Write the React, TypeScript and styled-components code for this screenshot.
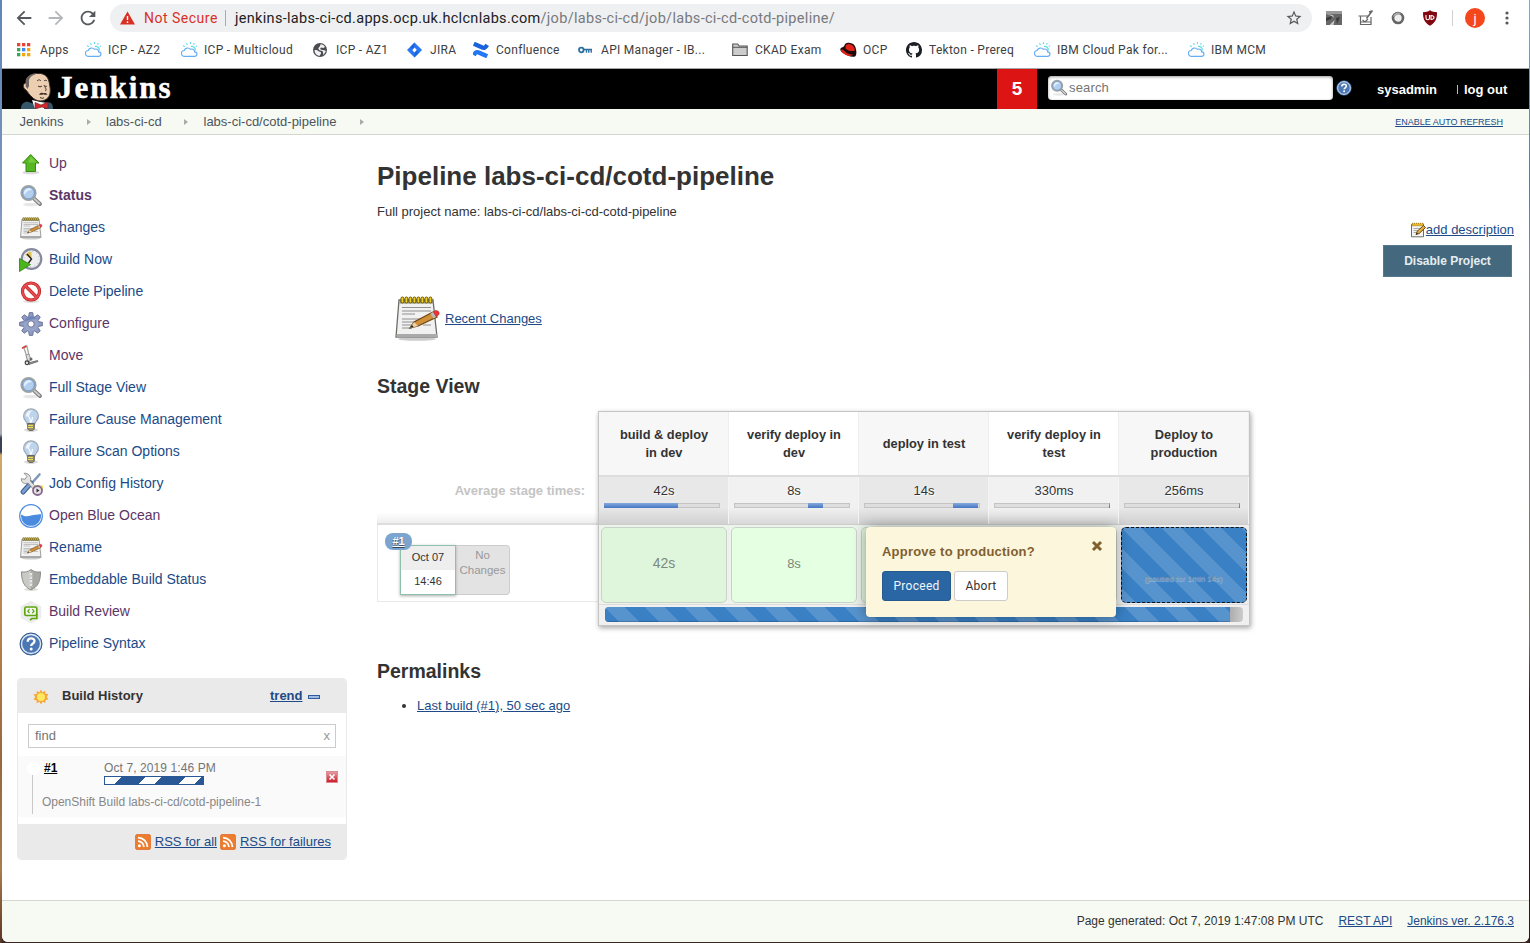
import React from "react";
import styled, { createGlobalStyle } from "styled-components";

const GlobalStyle = createGlobalStyle`
  * { box-sizing: border-box; }
  body { margin: 0; width: 1530px; height: 943px; overflow: hidden; color: #333; font: 13px/17px "Liberation Sans", Arial, sans-serif; }
  svg { display: block; flex: none; }
  h1, h2, ul { margin: 0; padding: 0; }
`;

const UI = `Roboto, "Liberation Sans", sans-serif`;

const Desktop = styled.div`
  width: 1530px; height: 943px; padding: 0 1px 1px 2px;
  background:
    linear-gradient(#8aa4bf 0, #5f7896 180px, #8a8a92 270px, #77706c 640px, #2b1a18 700px, #2b1a18 100%) right / 1px 100% no-repeat,
    linear-gradient(#5f86b8 0, #7b95c0 200px, #b0b2bd 330px, #a9abb5 434px, #3b3f55 438px, #3b3f55 452px, #d2a768 455px, #b5804c 640px, #98673f 760px, #a87d4c 870px, #5a3523 943px) left / 2px 100% no-repeat,
    #3a2724;
`;
const Window = styled.div`
  height: 942px; display: flex; flex-direction: column; background: #fff;
  border-radius: 0 0 6px 6px; overflow: hidden;
`;

/* ---------- browser chrome ---------- */
const Toolbar = styled.div`
  height: 36px; display: flex; align-items: center; padding-left: 11px; flex: none; font-family: ${UI};
`;
const ToolButton = styled.div<{ $w?: number }>`
  width: ${(p) => p.$w ?? 32}px; display: flex; justify-content: center; flex: none;
`;
const Omnibox = styled.div`
  width: 1202px; height: 28px; margin-left: 6px; border-radius: 14px; background: #eff0f2;
  display: flex; align-items: center; padding: 0 9px 0 10px; flex: none; font-size: 14px; color: #202124;
`;
const NotSecure = styled.span`
  width: 81px; margin-left: 9px; color: #d93025; letter-spacing: .5px; white-space: nowrap;
`;
const OmniRule = styled.span`width: 1px; height: 16px; background: #a9abae; margin-right: 9px;`;
const Url = styled.span`
  flex: 1; letter-spacing: .31px; white-space: nowrap; font-size: 14.5px;
  span { color: #77797d; }
`;
const Avatar = styled.div`
  width: 20px; height: 20px; border-radius: 50%; background: #f4471c; color: #fff;
  display: flex; align-items: center; justify-content: center; font-size: 13px;
`;
const ToolRule = styled.span`width: 1px; height: 16px; background: #d0d0d2; margin: 0 3px 0 12px;`;

const Bookmarks = styled.div`
  height: 33px; display: flex; padding: 0 0 5px 15px; align-items: center; flex: none;
  border-bottom: 1px solid #a6a6a6; font: 12px/16px ${UI}; color: #3c4043;
`;
const Bookmark = styled.div<{ $w: number }>`
  width: ${(p) => p.$w}px; display: flex; align-items: center; white-space: nowrap; flex: none;
  letter-spacing: .3px;
`;
const BookmarkIcon = styled.span`width: 23px; flex: none;`;

/* ---------- page header ---------- */
const Header = styled.header`
  height: 40px; background: #000; display: flex; flex: none; align-items: center; color: #fff;
`;
const Brand = styled.div`
  width: 995px; height: 40px; display: flex; align-items: flex-end; padding-left: 18px; gap: 3px;
  font: bold 31px/42px "Liberation Serif", serif; letter-spacing: 2px; -webkit-text-stroke: .5px #fff;
`;
const Alert = styled.div`
  width: 40px; height: 40px; background: #dc1414; text-align: center; font: bold 19px/40px "Liberation Sans", sans-serif;
`;
const SearchBox = styled.div`
  width: 285px; height: 24px; margin: -3px 3px 0 11px; padding-left: 2px; border-radius: 4px; background: #fff;
  box-shadow: inset 0 1px 3px #999; display: flex; align-items: center; gap: 1px; color: #757575;
  font-size: 13px; letter-spacing: .15px;
`;
const SearchHelp = styled.div`margin-top: -2px;`;
const HeaderLinks = styled.div`
  display: flex; margin-left: 25px; font-weight: bold; letter-spacing: 0; padding-top: 1px; align-items: center;
  span { width: 80px; }
`;
const Tick = styled.i`width: 1px; height: 9px; background: #bbb; margin: -1px 6px 0 0;`;

const Crumbs = styled.nav`
  height: 26px; background: #f6faf2; border-bottom: 1px solid #d3d7cf; display: flex; align-items: center; flex: none;
  padding: 0 26px 0 17.5px; color: #4d545d;
`;
const Crumb = styled.span<{ $w: number }>`
  width: ${(p) => p.$w}px; display: flex; justify-content: space-between; align-items: center; margin-right: 15.500px; letter-spacing: 0;
  &::after { content: ""; border-left: 4px solid #aaa; border-top: 3px solid transparent; border-bottom: 3px solid transparent; margin-top: 1px; }
`;
const AutoRefresh = styled.a`
  margin: 2px 0 0 auto; color: #204a87; text-decoration: underline; font-size: 9px;
`;

/* ---------- side panel ---------- */
const Page = styled.div`flex: 1; display: flex; min-height: 0;`;
const Side = styled.aside`width: 345px; padding: 12px 0 0 15px; flex: none;`;
const Task = styled.div<{ $visited?: boolean; $bold?: boolean }>`
  height: 32px; display: flex; align-items: center; gap: 6px; padding-left: 2px; font-size: 14px;
  color: ${(p) => (p.$visited ? "#5c3566" : "#204a87")}; font-weight: ${(p) => (p.$bold ? "bold" : "normal")};
  svg { margin-top: 1px; }
`;
const History = styled.section`
  width: 330px; height: 182px; margin-top: 19px; border: 1px solid #eaeaea; border-radius: 4px; overflow: hidden;
  display: flex; flex-direction: column;
`;
const HistoryHead = styled.div`
  height: 34px; background: #eaeaea; display: flex; align-items: center; padding: 0 0 1px 15px; font-weight: bold; flex: none; font-size: 13px;
  svg { margin-top: 2px; }
`;
const HistoryTitle = styled.span`width: 208px; margin-left: 13px;`;
const Link = styled.a`color: #204a87; text-decoration: underline; white-space: nowrap;`;
const Minus = styled.i`width: 12px; height: 4px; margin: 3px 0 0 5px; border: 1px solid #2f5b9d; background: #9dbce4;`;
const Find = styled.div`
  margin: 11px 10px 8px; height: 24px; border: 1px solid #ccc; display: flex; justify-content: space-between; align-items: center;
  padding: 0 5px 1px 6px; color: #757575; flex: none; font-size: 13px;
  span + span { color: #999; font-size: 13px; }
`;
const BuildRow = styled.div`
  height: 61px; background: #fafafa; display: grid; grid-template-columns: 24px 60px 221px auto; grid-template-rows: 34px 27px; flex: none;
`;
const Node = styled.div`
  grid-column: 1; grid-row: 1 / 3; margin-left: 7px; width: 16px; display: flex; flex-direction: column; align-items: center; padding-top: 6px;
  &::before { content: ""; width: 13px; height: 13px; border-radius: 50%; background: #fff; }
  &::after { content: ""; width: 1px; height: 39px; background: #c8c8c8; margin-right: 1px; }
`;
const BuildNo = styled.a`
  grid-column: 2; grid-row: 1; color: #000; font-weight: bold; text-decoration: underline; padding: 4px 0 0 2px; font-size: 12px;
`;
const BuildTime = styled.div`
  grid-column: 3; grid-row: 1; color: #757575; font-size: 12px; padding: 4px 0 0 2px; line-height: 16px; letter-spacing: .1px;
`;
const BuildBar = styled.div`
  width: 100px; height: 9px; border: 1px solid #2a5795;
  background: repeating-linear-gradient(135deg, #fff 0 11.500px, #2a5795 11.500px 28.300px);
`;
const Stop = styled.div`
  grid-column: 4; grid-row: 1;
  width: 12px; height: 12px; margin: 15px 0 0 3px; border: 1px solid #d98a92; background: linear-gradient(#e59aa0, #cf1c28);
  display: flex; align-items: center; justify-content: center;
`;
const BuildDesc = styled.div`grid-column: 2 / 5; grid-row: 2; padding: 4px 0 0; color: #888; font-size: 12px; letter-spacing: -.02px;`;
const Feeds = styled.div`
  margin-top: auto; height: 35px; background: #eaeaea; display: flex; align-items: center; justify-content: flex-end; gap: 3.500px; padding-right: 15px; font-size: 13px;
`;

/* ---------- main panel ---------- */
const Main = styled.main`flex: 1; padding: 26px 15px 0 30px; display: flex; flex-direction: column; align-items: flex-start;`;
const Title = styled.h1`font-size: 26px; line-height: 30px; white-space: nowrap;`;
const FullName = styled.div`margin-top: 12px; font-size: 13px;`;
const Actions = styled.div`
  align-self: flex-end; display: flex; flex-direction: column; align-items: flex-end; margin-top: 1px;
`;
const AddDesc = styled.div`display: flex; align-items: center; height: 17px; font-size: 13px;`;
const Disable = styled.button`
  width: 129px; height: 32px; margin: 7px 2px 0 0; border: 1px solid #56798e; background: #44697f; color: #e6edf1; padding: 0;
  font: bold 12px/30px "Liberation Sans", sans-serif; letter-spacing: 0;
`;
const Recent = styled.div`display: flex; align-items: center; gap: 4px; margin: 17px 0 0 16px; height: 48px; font-size: 13px;`;
const SubTitle = styled.h2<{ $mt: number }>`font-size: 19.500px; line-height: 24px; margin-top: ${(p) => p.$mt}px;`;

const StageView = styled.div`margin-top: 13px; height: 215px; display: flex;`;
const Runs = styled.div`width: 221px; display: flex; flex-direction: column; padding-top: 65px;`;
const AvgLabel = styled.div`
  height: 49px; padding: 6px 13px 0 0; text-align: right; font-weight: bold; color: #c4c4c4; line-height: 18px;
  border-bottom: 2px solid #ddd; background: linear-gradient(#fff 78%, #eee);
`;
const Run = styled.div`
  position: relative; height: 77px; border: solid #e9e9e9; border-width: 0 0 1px 1px; display: flex; padding: 20px 0 0 22px;
`;
const Badge = styled.a`
  position: absolute; left: 7px; top: 8px; width: 27px; height: 17px; border-radius: 8px; background: #7ba4cf; color: #fff; z-index: 1;
  font: bold 11px/17px "Liberation Sans", sans-serif; text-align: center; text-decoration: underline; text-shadow: 0 1px 1px #345;
`;
const When = styled.div`
  width: 56px; height: 50px; border: 1px solid #8fc0ab; box-shadow: 0 1px 3px #aaa; text-align: center; font-size: 11px; line-height: 23px; z-index: 0;
  div:first-child { background: #eee; height: 24px; }
`;
const NoChanges = styled.div`
  width: 54px; height: 50px; border: 1px solid #ccc; border-left: 0; border-radius: 0 4px 4px 0; background: #e3e3e3; color: #999;
  font-size: 11.500px; line-height: 15px; text-align: center; padding-top: 2px;
`;
const Matrix = styled.div`
  width: 652px; height: 215px; border: 1px solid #c4c4c4; box-shadow: 1px 2px 5px rgba(0,0,0,.35); background: #f0f0f0; display: flex; flex-direction: column;
`;
const Columns = styled.div`display: grid; grid-template-columns: repeat(5, 130px); flex: none;`;
const Column = styled.div<{ $state: string }>`
  display: flex; flex-direction: column; background: ${(p) => (p.$state === "paused" ? "#eee" : "#edf5eb")};
  box-shadow: inset -1px 0 #eee;
`;
const StageName = styled.div<{ $odd: boolean }>`
  height: 63px; display: flex; align-items: center; justify-content: center; text-align: center; line-height: 18px; font-weight: bold;
  background: ${(p) => (p.$odd ? "#f7f7f7" : "#fff")}; padding: 0 12px; letter-spacing: 0; font-size: 12.800px;
  box-shadow: inset -1px 0 #eee;
`;
const StageAvg = styled.div<{ $odd: boolean }>`
  height: 50px; border-top: 2px solid #ddd; border-bottom: 1px solid #ccc; text-align: center; line-height: 18px; padding: 5px 9px 0 5px; text-shadow: 1px 1px 1px #fff;
  background: linear-gradient(transparent 65%, rgba(0,0,0,.1)), ${(p) => (p.$odd ? "#e8e8e8" : "#f1f1f1")};
  box-shadow: inset -1px 0 #f4f4f4;
  span { margin-left: 4px; }
`;
const Track = styled.div`
  width: 116px; height: 5px; margin-top: 3px; background: #dedede; display: flex; border: 1px solid #c4c4c4; border-width: 1px 1px 1px;
`;
const Fill = styled.i`height: 5px; margin-top: -1px; background: linear-gradient(#86a9dc, #4477c4); flex: none;`;
const Cell = styled.div<{ $odd: boolean; $state: string }>`
  margin: 2px 2px 1px; height: 76px; border-radius: 5px; display: flex; align-items: center; justify-content: center; color: #7c8a7c; font-size: ${(p) => (p.$odd ? 14 : 13)}px;
  padding-bottom: 4px; border: 1px solid #c8d2c8; background: ${(p) => (p.$odd ? "#dff6dd" : "#e5ffe3")};
  ${(p) => p.$state === "paused" && `
    border: 1px dashed #111; color: #7d93a8; font-size: 8px; padding: 26px 0 0;
    text-shadow: 0 1px 1px #fff8;
    background: linear-gradient(45deg, rgba(255,255,255,.15) 25%, transparent 25%, transparent 50%, rgba(255,255,255,.15) 50%, rgba(255,255,255,.15) 75%, transparent 75%) 0 0 / 40px 40px, #3a80c4;
  `}
`;
const RunProgress = styled.div`
  flex: 1; border-top: 1px solid #ddd; padding: 2px 5px 0 6px;
`;
const ProgressTrack = styled.div`
  height: 15px; width: 638px; border-radius: 4px; overflow: hidden; background: linear-gradient(90deg, #aaa 624px, #ccc);
`;
const ProgressFill = styled.div`
  width: 625px; height: 15px; box-shadow: inset 0 -1px 1px #0003;
  background: linear-gradient(45deg, rgba(255,255,255,.15) 25%, transparent 25%, transparent 50%, rgba(255,255,255,.15) 50%, rgba(255,255,255,.15) 75%, transparent 75%) 0 0 / 40px 40px, #3a80c4;
`;
const StageHolder = styled.div`position: relative;`;
const Popover = styled.div`
  position: absolute; left: 268px; top: 116px; width: 250px; height: 90px; padding: 15px 16px; border-radius: 4px; background: #fcf6dd;
  box-shadow: 0 0 14px rgba(0,0,0,.38); z-index: 2;
`;
const Ask = styled.div`
  display: flex; justify-content: space-between; font-weight: bold; color: #815f2f; font-size: 13px; line-height: 19px; letter-spacing: .22px;
  svg { margin: -2px -3px 0 0; }
`;
const Buttons = styled.div`display: flex; gap: 3px; margin-top: 10px;`;
const Choice = styled.button<{ $primary?: boolean; $w: number }>`
  width: ${(p) => p.$w}px; height: 30px; border-radius: 3px; padding: 0; font: 12px/26px ${UI}; letter-spacing: .3px;
  border: 1px solid ${(p) => (p.$primary ? "#265a8e" : "#ccc")}; background: ${(p) => (p.$primary ? "#2966a3" : "#fff")}; color: ${(p) => (p.$primary ? "#f0f5fa" : "#333")};
`;
const Permalinks = styled.ul`margin: 14px 0 0 40px; font-size: 13px;`;

const Footer = styled.footer`
  height: 42px; border-top: 1px solid #d3d7cf; background: #f6faf2; display: flex; justify-content: flex-end; align-items: center; gap: 15px; padding: 0 15px 1px 0; font-size: 12px; flex: none;
`;

/* ---------- icons ---------- */
const Notepad = ({ size = 24 }: { size?: number }) => (
  <svg width={size} height={size} viewBox="0 0 48 48">
    <ellipse cx="24" cy="45" rx="19" ry="1.800" fill="#ccc" />
    <path d="M6 6h34l4 37H3z" fill="#f1f1f1" stroke="#6e6e68" strokeWidth="1.300" />
    <path d="M4 40h40l.4 3.500H3.400z" fill="#aaa" />
    <path d="M7 5h33l.6 4.500H6.500z" fill="#8f8f80" />
    {[8, 12, 16, 20, 24, 28, 32, 36].map((x) => <rect key={x} x={x} y="3" width="2.800" height="6" rx="1.300" fill="#f0d020" stroke="#6a5600" strokeWidth="1" />)}
    <path d="M9 13.500h29M9 17h29M9 20h13M9 25h18M9 28h16M9 31h12M9 34h10M30 31h8" stroke="#8f8f8f" strokeWidth="1" />
    <path d="M17 34l4-6 19-10 4 5-19 9z" fill="#cf9038" stroke="#6d4413" strokeWidth="1.200" />
    <path d="M17 34l4-6 4 4z" fill="#ecd6a8" />
    <path d="M17 34l2-3 1.500 1.800z" fill="#222" />
    <path d="M40 18l2.500-1.500c3-.5 5 3 2.500 5L43 23z" fill="#e33" stroke="#a33" strokeWidth=".6" />
    <path d="M37.500 19.500l2.500-1.500 3 5-2.500 1.500z" fill="#bbb" />
  </svg>
);
const Memo = () => (
  <svg width="16" height="16" viewBox="0 0 16 16">
    <path d="M1.500 2.500h12v12.300h-12z" fill="#f3f3f3" stroke="#6e6e68" strokeWidth="1" />
    <path d="M2 1.300h11.500v2.500H2z" fill="#e8b52a" stroke="#8a6500" strokeWidth=".8" strokeDasharray="1 1" />
    <path d="M3.500 6.500h7M3.500 8.500h5M3.500 10.500h3" stroke="#aaa" />
    <path d="M6 12.500l1.200-3.200L13.500 3.500l2 2-6.300 6z" fill="#e3ae3d" stroke="#5d3c0c" strokeWidth=".9" />
    <path d="M6 12.500l.8-2 1.200 1.200z" fill="#222" />
  </svg>
);
const Lens = ({ size = 24 }: { size?: number }) => (
  <svg width={size} height={size} viewBox="0 0 24 24">
    <ellipse cx="12" cy="20.500" rx="8" ry="1.700" fill="#e8e8e8" />
    <path d="M15 14.500l6 5.500" stroke="#777" strokeWidth="3.800" strokeLinecap="round" />
    <path d="M15.500 15l5 4.500" stroke="#ccc" strokeWidth="2" strokeLinecap="round" />
    <circle cx="9.500" cy="9" r="7.200" fill="#b3cff0" stroke="#a2a39f" strokeWidth="1.800" />
    <circle cx="9.500" cy="9" r="5.900" fill="none" stroke="#5d86bd" strokeWidth=".8" />
    <path d="M5 9a4.800 4.800 0 018-3.500C9 6 7 8 5.500 11z" fill="#e6f0fc" />
  </svg>
);
const Bulb = () => (
  <svg width="24" height="24" viewBox="0 0 24 24">
    <ellipse cx="12" cy="22" rx="7" ry="1.700" fill="#ddd" />
    <path d="M12 .8a7.400 7.400 0 00-7.400 7.400c0 4 3.600 5 4 8.800h6.800c.4-3.800 4-4.800 4-8.800A7.400 7.400 0 0012 .8z" fill="#bdd4ee" stroke="#a3a9b3" strokeWidth="1.200" />
    <path d="M7 8c0-4 3-5.500 6-5.500-2 2-3 4-3 7z" fill="#eef5fd" />
    <path d="M10.500 9l1 5h1l1-5" fill="none" stroke="#fff" strokeWidth="1.200" />
    <path d="M8.700 15.500h6.600v5.500l-1.500 1.600h-3.600L8.700 21z" fill="#96906a" stroke="#55534a" strokeWidth=".8" />
    <path d="M9 17.500h5M9 19.500h5" stroke="#e6e05a" strokeWidth="1" />
  </svg>
);
const Up = () => (
  <svg width="24" height="24" viewBox="0 0 24 24">
    <ellipse cx="12" cy="20.500" rx="8.500" ry="1.700" fill="#d8d8d8" />
    <path d="M11.700 2.500l8.300 8.500h-3.500v8.500h-9.500V11H3.500z" fill="#58b624" stroke="#358a0c" strokeWidth="1" />
    <path d="M12 4.500l5.500 6H9z" fill="#85d44c" opacity=".7" />
  </svg>
);
const BuildNow = () => (
  <svg width="24" height="24" viewBox="0 0 24 24">
    <circle cx="12.500" cy="11" r="9.800" fill="#eeeef0" stroke="#85889e" strokeWidth="2.200" />
    <circle cx="12.500" cy="11" r="7.500" fill="none" stroke="#bbb" strokeWidth="1" strokeDasharray="1 3" />
    <path d="M12.500 11V3.500A8 8 0 006.500 7z" fill="#dfc45c" />
    <path d="M8 6l4.500 5-3 4" fill="none" stroke="#222" strokeWidth="1.400" />
    <path d="M.5 10.500l11 6-11 7z" fill="#4db51c" stroke="#2e7e08" strokeWidth=".8" />
  </svg>
);
const Delete = () => (
  <svg width="24" height="24" viewBox="0 0 24 24">
    <ellipse cx="12" cy="21.500" rx="8" ry="1.500" fill="#ddd" />
    <circle cx="12" cy="11.500" r="8.500" fill="#fff" stroke="#b8171b" strokeWidth="3.200" />
    <path d="M6.500 6l11 11" stroke="#c41a1e" strokeWidth="3.200" />
    <circle cx="12" cy="11.500" r="8.500" fill="none" stroke="#e54c4f" strokeWidth="2" />
    <path d="M6.500 6l11 11" stroke="#e54c4f" strokeWidth="2" />
  </svg>
);
const Gear = () => (
  <svg width="24" height="24" viewBox="0 0 24 24">
    <g fill="#8f9bc4" stroke="#5d6689" strokeWidth=".8">
      {[0, 45, 90, 135, 180, 225, 270, 315].map((a) => <path key={a} d="M9.300 6L10.300.6h3.400L14.700 6z" transform={`rotate(${a} 12 12)`} />)}
    </g>
    <circle cx="12" cy="12" r="7.600" fill="#98a3c9" />
    <path d="M5 10a7.500 7.500 0 0113-3c-5 0-9 1-13 3z" fill="#6d85b8" />
    <circle cx="12" cy="12" r="3.200" fill="#fff" stroke="#6d7699" strokeWidth="1" />
  </svg>
);
const Trolley = () => (
  <svg width="24" height="24" viewBox="0 0 24 24">
    <path d="M4.500 4L8 2.500 9.500 9l1 9M5 4l2 6 2 8" fill="none" stroke="#a5a59d" strokeWidth="1.300" />
    <path d="M3.500 4L7 2" stroke="#d33d3d" strokeWidth="1.600" strokeLinecap="round" />
    <path d="M7 11l3-1 2 6-3 2z" fill="#ddd" stroke="#888" strokeWidth=".8" />
    <path d="M9 19l9.500-2.500.5 1-9 3z" fill="#999" stroke="#555" strokeWidth=".7" />
    <circle cx="8" cy="18.800" r="1.900" fill="#ddd" stroke="#333" strokeWidth="1.100" />
    <circle cx="12" cy="15" r="1.500" fill="#666" />
  </svg>
);
const Tools = () => (
  <svg width="24" height="24" viewBox="0 0 24 24">
    <path d="M20.500 2.500l-8 9" stroke="#8298b8" strokeWidth="2.600" strokeLinecap="round" />
    <path d="M12 11L4 20" stroke="#3b5f95" strokeWidth="5" strokeLinecap="round" />
    <path d="M12 11L4 20" stroke="#7d9fcf" strokeWidth="2.800" strokeLinecap="round" />
    <path d="M5 1.300l3 3-2 3-3.700-.6C2 11 6 12.500 9 11l9 10.500 3-2L11.500 9C12.500 4 9 .8 5 1.300z" fill="#e2e2e0" stroke="#888" strokeWidth=".9" />
    <rect x="14" y="13.500" width="10" height="5" fill="#eedb64" />
    <circle cx="18.500" cy="18.500" r="4.500" fill="#e7dfe9" stroke="#846a8c" strokeWidth="1.800" />
    <path d="M17.500 16.500l3 2-3 2z" fill="#333" />
  </svg>
);
const Ocean = () => (
  <svg width="24" height="24" viewBox="0 0 24 24">
    <circle cx="12" cy="12" r="11.300" fill="#fff" stroke="#4a8bdf" strokeWidth="1.300" />
    <path d="M2.200 10.500c4 2.500 6.500 2 9.800 1 3.500-1 6-.5 9.800-1.500A9.800 9.800 0 0112 21.800 9.800 9.800 0 012.200 10.500z" fill="#4a8bdf" />
  </svg>
);
const Shield = () => (
  <svg width="24" height="24" viewBox="0 0 24 24">
    <ellipse cx="12" cy="21.500" rx="7" ry="1.500" fill="#ddd" />
    <path d="M12 1.500c-3 2.500-6.500 3-9.500 2.300C2.500 13 5 19 12 21.800z" fill="#c9c9c5" />
    <path d="M12 1.500c3 2.500 6.500 3 9.500 2.300C21.500 13 19 19 12 21.800z" fill="#a7a8a4" />
    <path d="M12 1.500c3 2.500 6.500 3 9.500 2.300C21.500 13 19 19 12 21.800 5 19 2.500 13 2.500 3.800 5.500 4.500 9 4 12 1.500z" fill="none" stroke="#8d8e8a" />
    <path d="M12 4v15" stroke="#e8e8e8" strokeWidth="2.500" />
    <path d="M12 4v15" stroke="#777" strokeDasharray="1 2.500" />
  </svg>
);
const Review = () => (
  <svg width="24" height="24" viewBox="0 0 24 24">
    <path d="M12 .8l10.300 5.600v11.500L12 23.600 1.700 17.900V6.400z" fill="#ececec" />
    <rect x="5.800" y="7" width="12" height="8.500" rx="1.500" fill="#f4f4f4" stroke="#5ea60d" strokeWidth="1.700" />
    <path d="M10.500 9.200L8.800 11.200l1.700 2M13.300 9.200l1.700 2-1.700 2" fill="none" stroke="#5ea60d" strokeWidth="1.200" />
    <path d="M17.800 14v4.500H13l-2 1.500" fill="none" stroke="#5ea60d" strokeWidth="1.700" />
  </svg>
);
const Help = ({ size = 24 }: { size?: number }) => (
  <svg width={size} height={size} viewBox="0 0 24 24">
    <circle cx="12" cy="12" r="11" fill="#4b77b4" stroke="#33598f" strokeWidth="1" />
    <circle cx="12" cy="12" r="9.500" fill="none" stroke="#e2eaf4" strokeWidth="1.400" />
    <path d="M8.700 9.700C8.700 5.500 15.500 5.500 15.500 9c0 2.700-3.300 2.600-3.300 5" fill="none" stroke="#fff" strokeWidth="2.300" />
    <circle cx="12.200" cy="17" r="1.500" fill="#fff" />
  </svg>
);
const Cloud = () => (
  <svg width="17" height="17" viewBox="0 0 17 17" fill="none">
    <path d="M3.500 15.300a2.900 2.900 0 01-.4-5.800C4 7 7.500 6 9.500 8.300c2-.9 4.300.5 4.200 2.500 3 .1 3 4.500 0 4.500z" stroke="#66aef5" strokeWidth="1.200" />
    <path d="M10 5.500c2.500-.5 4.500 1.300 4.300 4" stroke="#5fe0e0" strokeWidth="1.200" />
    <path d="M9.500 1v2M5.500 2l.9 1.900M2 4.500l1.700 1.200M13.300 2l-.8 1.800M16 4.800l-1.300.8" stroke="#6bdcea" strokeWidth="1.100" />
  </svg>
);
const Grid = () => (
  <svg width="15" height="15" viewBox="0 0 15 15">
    {["#ea4335", "#ea4335", "#ea4335", "#34a853", "#4285f4", "#f5a60a", "#34a853", "#f5a60a", "#f5a60a"].map((c, i) => (
      <rect key={i} x={(i % 3) * 5} y={Math.floor(i / 3) * 5 + 1} width="3.300" height="3.300" fill={c} />
    ))}
  </svg>
);
const Globe = () => (
  <svg width="16" height="16" viewBox="0 0 16 16">
    <circle cx="7" cy="8" r="7" fill="#4a4c50" />
    <path d="M1.500 8c1.500-.3 4 .3 4.500 1.500 1 .2 2.500.5 2 2L6.500 14C3.500 13.500 1.500 11.500 1.500 8zM7.500 2.200c1.500-.2 3.500.8 4.500 2.600L10.500 6 8 5.500 7 7l2 1 2.500.2L12.800 9c-.5 2-1.500 3-2.800 3.800.3-1.800.2-2.800-.5-3.500-1-.8-3.500-.8-4-2.300C5 5.500 7.500 4.500 7.500 2.200z" fill="#fff" opacity=".92" />
  </svg>
);
const Jira = () => (
  <svg width="16" height="16" viewBox="0 0 16 16">
    <path d="M7.500.4l7.600 7.600-7.600 7.600L-.1 8z" fill="#2878f5" />
    <path d="M7.500 5.600L9.900 8l-2.400 2.400L5.100 8z" fill="#fff" />
    <path d="M7.500.4v5.200L5.100 8 3.500 4.400zM7.500 15.600v-5.200L9.900 8l1.600 3.600z" fill="#0d50bd" opacity=".45" />
  </svg>
);
const Confluence = () => (
  <svg width="16" height="16" viewBox="0 0 16 16" fill="none" strokeWidth="4.400">
    <path d="M.8 13.200c2-3.300 3-3.700 6-2.300l7.400 3.300" stroke="#2277f3" />
    <path d="M14.200 2.800c-2 3.300-3 3.700-6 2.300L.8 1.800" stroke="#1a62dc" />
  </svg>
);
const Key = () => (
  <svg width="16" height="16" viewBox="0 0 16 16" fill="none" stroke="#2b6f9f">
    <circle cx="3.300" cy="8" r="2.300" strokeWidth="1.800" />
    <path d="M5.500 7.500H14M8.500 7.500v3.300M10.800 7.500v3.300M13.200 7.500v3.300" strokeWidth="1.400" />
  </svg>
);
const Folder = () => (
  <svg width="16" height="16" viewBox="0 0 16 16">
    <path d="M.7 2h5l1.500 2h8v9.500H.7z" fill="#ccc" stroke="#555" strokeWidth="1.100" />
    <path d="M.7 5.300h14.500" stroke="#555" />
  </svg>
);
const Hat = () => (
  <svg width="17" height="16" viewBox="0 0 17 16">
    <path d="M4.200 4C5 .8 7.500.3 10 1c4 .5 5.500 3 6 6.500.8 3 .3 6-1 7-4 1-8-1-10.500-3C1.500 10.500-.2 8.500.5 6.500 1.500 5 3.500 5.500 4.200 4z" fill="#1b0a09" />
    <path d="M5.500 4.500C6 2 8 1.500 10 2.200c3 .5 4.500 2.500 5 6C13 10 8 9 5.500 6.500z" fill="#e2231a" />
    <path d="M.8 7.800c1-.8 2.500 0 3.700 1.200 2 2.200 5.500 4 8.500 3.500-1 1.500-3.500 2-6.500.8C4 12.500 1 10 .8 7.800z" fill="#e2231a" />
  </svg>
);
const GitHub = () => (
  <svg width="16" height="16" viewBox="0 0 16 16">
    <path fillRule="evenodd" fill="#1b1f23" d="M8 0C3.580 0 0 3.580 0 8c0 3.540 2.290 6.530 5.470 7.590.4.070.55-.17.55-.38 0-.19-.01-.82-.01-1.490-2.010.37-2.530-.49-2.690-.94-.09-.23-.48-.94-.82-1.130-.28-.15-.68-.52-.01-.53.63-.01 1.080.58 1.230.82.72 1.210 1.870.87 2.330.66.070-.52.28-.87.51-1.070-1.780-.2-3.640-.89-3.640-3.950 0-.87.31-1.590.82-2.150-.08-.2-.36-1.020.08-2.120 0 0 .67-.21 2.200.82.64-.18 1.320-.27 2-.27s1.360.09 2 .27c1.530-1.040 2.200-.82 2.200-.82.44 1.100.16 1.920.08 2.120.51.56.82 1.270.82 2.150 0 3.070-1.870 3.750-3.650 3.950.29.25.54.73.54 1.480 0 1.070-.01 1.930-.01 2.200 0 .21.15.46.55.38A8.010 8.010 0 0016 8c0-4.420-3.580-8-8-8z" />
  </svg>
);
const Butler = () => (
  <svg width="34" height="38" viewBox="0 0 34 38">
    <path d="M1 38c0-4 1.500-6.500 6-7.500l6 2 9-2 8 1c2.500 1 3 3 3 6.500z" fill="#36566b" />
    <path d="M12 29l3 9h9l1-6z" fill="#fff" />
    <path d="M6 19C2 17 3 12 6 12 6 5 12 2 18 2.500c7-.5 11 4 11.500 11 1.500 6 1 12-3 14.500-5 3.500-11 2-14.500-2-2.500-2-3.500-4-6-7z" fill="#eccfb1" stroke="#3b2d27" strokeWidth="1" />
    <path d="M6 13C4 7 10 1.500 18 2.500c-6 1.500-8 3.500-9 6.500l0 6-1.500 3-2-3z" fill="#6d6461" />
    <path d="M17 10c2-2 3-1 4 0M24 10c1-1 2-1 3 0M18 15c1 1 3 1 4 0M25 15c1 1 2 0 2 0M24 14c2 4 3 5 1 6" fill="none" stroke="#3b2d27" strokeWidth="1" />
    <path d="M19 23.500c1.500-2.500 3.500-2 4.500-1.200 1.500-.8 3.500 0 4 1.200-2 .5-3 .3-4-.3-1.500.8-3 .8-4.500.3z" fill="#3b2d27" />
    <path d="M20 26.500c2 1 3 1 4 0" stroke="#3b2d27" fill="none" />
    <path d="M15 31.500l6 2.500 7-3v7l-6-2-7 2z" fill="#d22b2f" stroke="#6d1416" strokeWidth=".6" />
  </svg>
);
const Sun = () => (
  <svg width="16" height="16" viewBox="0 0 16 16">
    <path d="M8 .5l1.600 2.700 2.700-1.400.1 3 3 .2L13.800 8l1.700 2.500-3 .5-.2 3-2.700-1.200L8 15.500l-1.600-2.700-2.700 1.400-.1-3-3.100-.4L2.200 8 .5 5.300l3.200-.4.1-3 2.700 1.300z" fill="#f6a83e" />
    <circle cx="8" cy="8" r="4.500" fill="#ffe95e" stroke="#eda03a" strokeWidth=".8" />
  </svg>
);
const Rss = () => (
  <svg width="16" height="16" viewBox="0 0 16 16">
    <rect x=".3" y=".3" width="15.400" height="15.400" rx="2.500" fill="#ee7c2f" stroke="#d5601c" strokeWidth=".6" />
    <circle cx="4.400" cy="11.700" r="1.500" fill="#fff" />
    <path d="M3 7.200a6 6 0 015.900 5.900M3 3.700a9.500 9.500 0 019.400 9.400" fill="none" stroke="#fff" strokeWidth="1.800" />
  </svg>
);

const bookmarks = [
  { icon: <Grid />, label: "Apps", w: 68 },
  { icon: <Cloud />, label: "ICP - AZ2", w: 96 },
  { icon: <Cloud />, label: "ICP - Multicloud", w: 132 },
  { icon: <Globe />, label: "ICP - AZ1", w: 94 },
  { icon: <Jira />, label: "JIRA", w: 66 },
  { icon: <Confluence />, label: "Confluence", w: 105 },
  { icon: <Key />, label: "API Manager - IB...", w: 154 },
  { icon: <Folder />, label: "CKAD Exam", w: 108 },
  { icon: <Hat />, label: "OCP", w: 66 },
  { icon: <GitHub />, label: "Tekton - Prereq", w: 128 },
  { icon: <Cloud />, label: "IBM Cloud Pak for...", w: 154 },
  { icon: <Cloud />, label: "IBM MCM", w: 90 },
];

const tasks = [
  { icon: <Up />, label: "Up", visited: true },
  { icon: <Lens />, label: "Status", visited: true, bold: true },
  { icon: <Notepad />, label: "Changes" },
  { icon: <BuildNow />, label: "Build Now" },
  { icon: <Delete />, label: "Delete Pipeline" },
  { icon: <Gear />, label: "Configure", visited: true },
  { icon: <Trolley />, label: "Move", visited: true },
  { icon: <Lens />, label: "Full Stage View" },
  { icon: <Bulb />, label: "Failure Cause Management" },
  { icon: <Bulb />, label: "Failure Scan Options" },
  { icon: <Tools />, label: "Job Config History" },
  { icon: <Ocean />, label: "Open Blue Ocean", visited: true },
  { icon: <Notepad />, label: "Rename" },
  { icon: <Shield />, label: "Embeddable Build Status" },
  { icon: <Review />, label: "Build Review", visited: true },
  { icon: <Help />, label: "Pipeline Syntax" },
];

const stages = [
  { name: ["build & deploy", "in dev"], avg: "42s", cell: "42s", start: -1, len: 74, state: "ok" },
  { name: ["verify deploy in", "dev"], avg: "8s", cell: "8s", start: 73, len: 15, state: "ok" },
  { name: ["deploy in test"], avg: "14s", cell: "", start: 88, len: 25, state: "ok" },
  { name: ["verify deploy in", "test"], avg: "330ms", cell: "", start: 114, len: 1, state: "ok" },
  { name: ["Deploy to", "production"], avg: "256ms", cell: "(paused for 1min 14s)", start: 114, len: 1, state: "paused" },
];

export default function App() {
  return (
    <Desktop>
      <GlobalStyle />
      <Window>
        <Toolbar>
          <ToolButton $w={22}><svg width="22" height="22" viewBox="0 0 24 24" fill="#55585c"><path d="M20 11H7.830l5.590-5.590L12 4l-8 8 8 8 1.410-1.410L7.830 13H20z" /></svg></ToolButton>
          <ToolButton $w={42}><svg width="22" height="22" viewBox="0 0 24 24" fill="#b4b6b9"><path d="M4 11h12.170l-5.590-5.590L12 4l8 8-8 8-1.410-1.410L16.170 13H4z" /></svg></ToolButton>
          <ToolButton $w={22}><svg width="22" height="22" viewBox="0 0 24 24" fill="#55585c"><path d="M17.650 6.350A7.958 7.958 0 0012 4c-4.420 0-7.990 3.580-7.990 8s3.570 8 7.990 8c3.730 0 6.840-2.550 7.730-6h-2.080A5.990 5.990 0 0112 18c-3.310 0-6-2.690-6-6s2.690-6 6-6c1.660 0 3.140.69 4.220 1.780L13 11h7V4z" /></svg></ToolButton>
          <ToolButton $w={5} />
          <Omnibox>
            <svg width="15" height="14" viewBox="0 0 15 14"><path d="M7.500.5L15 13.500H0z" fill="#d93025" /><path d="M7.500 5v4M7.500 10.300v1.600" stroke="#fff" strokeWidth="1.400" /></svg>
            <NotSecure>Not Secure</NotSecure>
            <OmniRule />
            <Url>jenkins-labs-ci-cd.apps.ocp.uk.hclcnlabs.com<span>/job/labs-ci-cd/job/labs-ci-cd-cotd-pipeline/</span></Url>
            <svg width="18" height="18" viewBox="0 0 24 24" fill="#55585c"><path d="M22 9.240l-7.190-.62L12 2 9.190 8.630 2 9.240l5.460 4.730L5.820 21 12 17.270 18.180 21l-1.630-7.030zM12 15.400l-3.760 2.270 1-4.280-3.320-2.880 4.380-.38L12 6.100l1.710 4.040 4.380.38-3.320 2.880 1 4.280z" /></svg>
          </Omnibox>
          <ToolButton $w={44}>
            <svg width="17" height="16" viewBox="0 0 17 16"><path d="M0 1h16v3H0z" fill="#999" /><path d="M0 4h16v11H0z" fill="#666" /><path d="M0 8l6-2-1 3-5 2zM10 8l4-1-3 7z" fill="#3a3a3a" /><path d="M3.500 15l5-5-1 5zM0 4l7 1 1 3-2-2z" fill="#c9c9c9" /></svg>
          </ToolButton>
          <ToolButton $w={20}>
            <svg width="16" height="16" viewBox="0 0 16 16" fill="none" stroke="#666"><path d="M10 6H.5M2.500 6v8.500h10.500V7M4.500 10l2.500 2 3-3M2.500 12h10" strokeWidth="1.200" /><path d="M8.500 8.500L14.500.5M11 2l3-1" strokeWidth="1.500" /></svg>
          </ToolButton>
          <ToolButton $w={44}>
            <svg width="14" height="14" viewBox="0 0 14 14"><circle cx="7" cy="7" r="5" fill="#eee" stroke="#666" strokeWidth="2.600" /><path d="M2 6a5 5 0 018-3.500L6 4z" fill="#aaa" /></svg>
          </ToolButton>
          <ToolButton $w={20}>
            <svg width="16" height="16" viewBox="0 0 16 16"><path d="M8 .3c2 1.400 4.500 1.900 7 2 0 6-1 10-7 13.500C2 12.300 1 8.300 1 2.300c2.500-.1 5-.6 7-2z" fill="#800610" /><path d="M4 5v3a1.500 1.500 0 003.500 0V5M9 5.500v4c4 .2 4-4.200 0-4z" fill="none" stroke="#fff" strokeWidth="1.100" /></svg>
          </ToolButton>
          <ToolRule />
          <ToolButton $w={38}><Avatar>j</Avatar></ToolButton>
          <ToolButton $w={26}><svg width="4" height="14" viewBox="0 0 4 14" fill="#55585c"><circle cx="2" cy="2" r="1.600" /><circle cx="2" cy="7" r="1.600" /><circle cx="2" cy="12" r="1.600" /></svg></ToolButton>
        </Toolbar>
        <Bookmarks>
          {bookmarks.map((b) => <Bookmark key={b.label} $w={b.w}><BookmarkIcon>{b.icon}</BookmarkIcon>{b.label}</Bookmark>)}
        </Bookmarks>

        <Header>
          <Brand><Butler />Jenkins</Brand>
          <Alert>5</Alert>
          <SearchBox><Lens size={18} />search</SearchBox>
          <SearchHelp><Help size={16} /></SearchHelp>
          <HeaderLinks><span>sysadmin</span><Tick />log out</HeaderLinks>
        </Header>
        <Crumbs>
          <Crumb $w={71}>Jenkins</Crumb>
          <Crumb $w={82}>labs-ci-cd</Crumb>
          <Crumb $w={160}>labs-ci-cd/cotd-pipeline</Crumb>
          <AutoRefresh>ENABLE AUTO REFRESH</AutoRefresh>
        </Crumbs>

        <Page>
          <Side>
            {tasks.map((t) => <Task key={t.label} $visited={t.visited} $bold={t.bold}>{t.icon}{t.label}</Task>)}
            <History>
              <HistoryHead><Sun /><HistoryTitle>Build History</HistoryTitle><Link>trend</Link><Minus /></HistoryHead>
              <Find><span>find</span><span>x</span></Find>
              <BuildRow>
                <Node />
                <BuildNo>#1</BuildNo>
                <BuildTime>Oct 7, 2019 1:46 PM<BuildBar /></BuildTime>
                <Stop><svg width="8" height="8" viewBox="0 0 8 8"><path d="M1.500 1.500l5 5M6.500 1.500l-5 5" stroke="#fff" strokeWidth="1.600" /></svg></Stop>
                <BuildDesc>OpenShift Build labs-ci-cd/cotd-pipeline-1</BuildDesc>
              </BuildRow>
              <Feeds><Rss /><Link>RSS for all</Link><Rss /><Link>RSS for failures</Link></Feeds>
            </History>
          </Side>

          <Main>
            <Title>Pipeline labs-ci-cd/cotd-pipeline</Title>
            <FullName>Full project name: labs-ci-cd/labs-ci-cd-cotd-pipeline</FullName>
            <Actions>
              <AddDesc><Memo /><Link>add description</Link></AddDesc>
              <Disable>Disable Project</Disable>
            </Actions>
            <Recent><Notepad size={48} /><Link>Recent Changes</Link></Recent>
            <SubTitle $mt={32}>Stage View</SubTitle>
            <StageView>
              <Runs>
                <AvgLabel>Average stage times:</AvgLabel>
                <Run>
                  <Badge>#1</Badge>
                  <When><div>Oct 07</div><div>14:46</div></When>
                  <NoChanges>No<br />Changes</NoChanges>
                </Run>
              </Runs>
              <StageHolder>
                <Matrix>
                  <Columns>
                    {stages.map((s, i) => {
                      const odd = i % 2 === 0;
                      return (
                        <Column key={i} $state={s.state}>
                          <StageName $odd={odd}>{s.name[0]}{s.name[1] && <><br />{s.name[1]}</>}</StageName>
                          <StageAvg $odd={odd}>
                            <span>{s.avg}</span>
                            <Track><Fill style={{ marginLeft: s.start, width: s.len }} /></Track>
                          </StageAvg>
                          <Cell $odd={odd} $state={s.state}>{s.cell}</Cell>
                        </Column>
                      );
                    })}
                  </Columns>
                  <RunProgress><ProgressTrack><ProgressFill /></ProgressTrack></RunProgress>
                </Matrix>
                <Popover>
                  <Ask>Approve to production?<svg width="12" height="12" viewBox="0 0 12 12"><path d="M2 2l8 8M10 2l-8 8" stroke="#815f2f" strokeWidth="3" /></svg></Ask>
                  <Buttons><Choice $primary $w={69}>Proceed</Choice><Choice $w={54}>Abort</Choice></Buttons>
                </Popover>
              </StageHolder>
            </StageView>
            <SubTitle $mt={33}>Permalinks</SubTitle>
            <Permalinks><li><Link>Last build (#1), 50 sec ago</Link></li></Permalinks>
          </Main>
        </Page>

        <Footer><span>Page generated: Oct 7, 2019 1:47:08 PM UTC</span><Link>REST API</Link><Link>Jenkins ver. 2.176.3</Link></Footer>
      </Window>
    </Desktop>
  );
}
